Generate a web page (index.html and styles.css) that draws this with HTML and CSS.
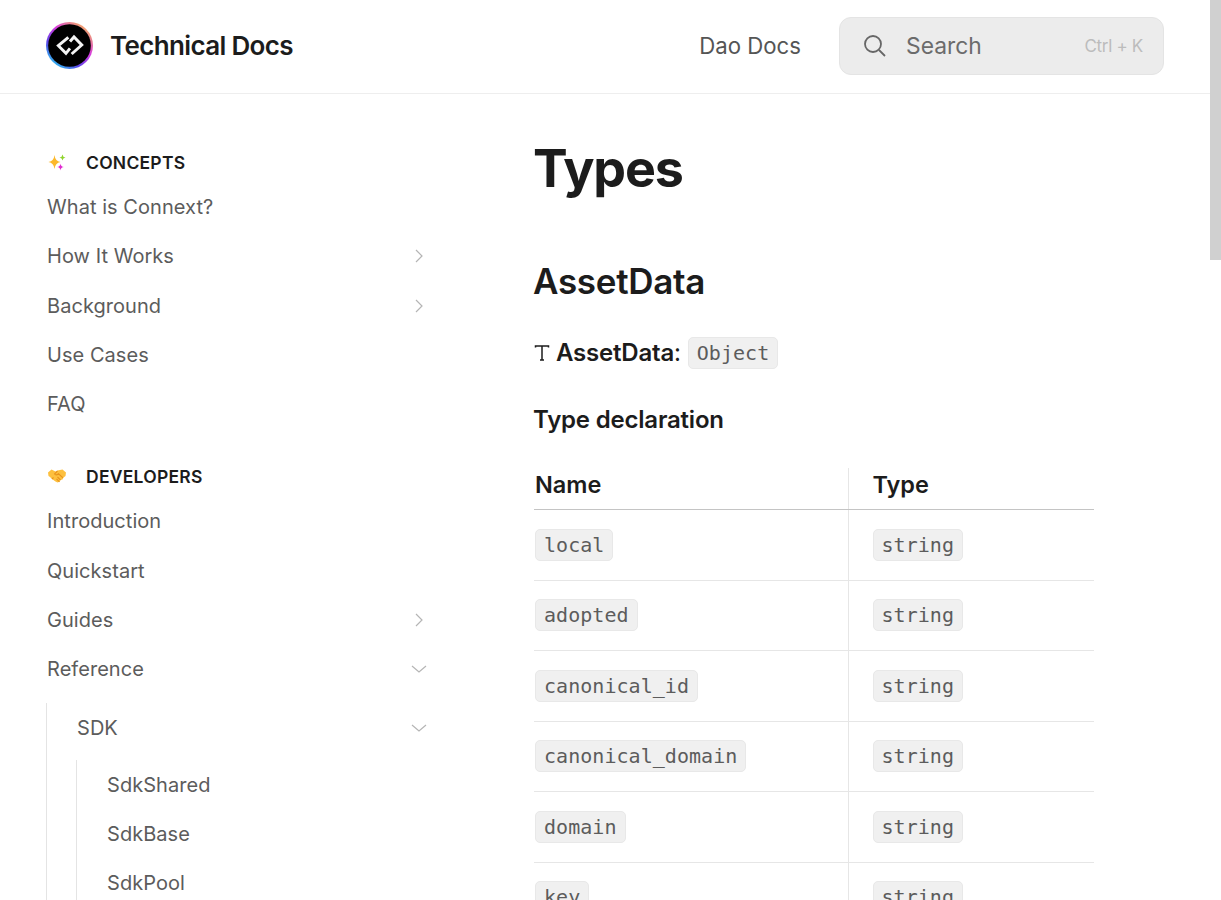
FILE: index.html
```html
<!DOCTYPE html>

<html>
<head>
    <title>Types - Technical Docs</title>
    <meta charset="UTF-8">
    <link rel="stylesheet" href="styles.css">
</head>
<body>

<div class="page">
    <header class="topbar">
        <a class="brand">
            <svg class="logo" viewBox="0 0 48 48" width="47" height="47">
                <defs>
                    <linearGradient id="ring" x1="0.85" y1="0.05" x2="0.15" y2="0.95">
                        <stop offset="0" stop-color="#f5b35c"/>
                        <stop offset="0.4" stop-color="#d63be0"/>
                        <stop offset="0.7" stop-color="#5b45e8"/>
                        <stop offset="1" stop-color="#29c6ee"/>
                    </linearGradient>
                </defs>
                <circle cx="24" cy="24" r="24" fill="url(#ring)"/>
                <circle cx="24" cy="24" r="21.8" fill="#000"/>
                <path d="M22.8 15.6 L12.6 24.2 L20.4 32 L24.5 27" fill="none" stroke="#f4f4f4" stroke-width="3"/>
                <path d="M26.2 32.7 L36.5 23.5 L28.6 15.3 L24.5 20" fill="none" stroke="#f4f4f4" stroke-width="3"/>
            </svg>
            <span class="brand-name">Technical Docs</span>
        </a>
        <a class="toplink">Dao Docs</a>
        <div class="search">
            <svg class="search-icon" viewBox="0 0 24 24" width="24" height="24">
                <circle cx="10" cy="10" r="8"/>
                <path d="M16 16 L22 22"/>
            </svg>
            <span class="search-label">Search</span>
            <span class="search-key">Ctrl + K</span>
        </div>
    </header>

    <div class="columns">
        <nav class="sidebar">
            <div class="nav-title">
                <svg class="nav-icon" viewBox="0 0 20 20" width="20" height="20">
                    <path fill="#fcb92c" d="M7.5 3 Q8.2 9.2 13.5 10 Q8.2 10.8 7.5 17 Q6.8 10.8 1.5 10 Q6.8 9.2 7.5 3 Z"/>
                    <path fill="#8fd42c" d="M15.5 2.5 Q15.8 5.2 18.5 5.5 Q15.8 5.8 15.5 8.5 Q15.2 5.8 12.5 5.5 Q15.2 5.2 15.5 2.5 Z"/>
                    <path fill="#e02bd0" d="M13.5 11.5 Q13.8 14.7 17 15 Q13.8 15.3 13.5 18.5 Q13.2 15.3 10 15 Q13.2 14.7 13.5 11.5 Z"/>
                </svg>
                CONCEPTS
            </div>
            <a class="nav-link">What is Connext?</a>
            <a class="nav-link">How It Works
                <svg class="chev" viewBox="0 0 16 16" width="16" height="16"><path d="M5 2 L11 8 L5 14"/></svg>
            </a>
            <a class="nav-link">Background
                <svg class="chev" viewBox="0 0 16 16" width="16" height="16"><path d="M5 2 L11 8 L5 14"/></svg>
            </a>
            <a class="nav-link">Use Cases</a>
            <a class="nav-link">FAQ</a>

            <div class="nav-title second">
                <svg class="nav-icon" viewBox="0 0 20 20" width="20" height="20">
                    <path fill="#fdc03f" d="M1 6.5 L4.5 3.5 L8.5 5.5 L10.5 4.5 L15.5 3.5 L19 6.5 L18.5 10 L16.5 11.5 L15.5 13.5 L13.5 14 L12.5 15.8 L10.5 16.5 L8.5 15.5 L5 13 L3 11 L1.5 10 Z"/>
                    <path fill="none" stroke="#e8931c" stroke-width="1.1" d="M10.5 5 L7.5 8 Q9 9.8 11.5 7.8 L16 11.8 M13.5 14 L10.5 11 M12.5 15.8 L9.5 12.8 M5 13 L6.5 11.5"/>
                </svg>
                DEVELOPERS
            </div>
            <a class="nav-link">Introduction</a>
            <a class="nav-link">Quickstart</a>
            <a class="nav-link">Guides
                <svg class="chev" viewBox="0 0 16 16" width="16" height="16"><path d="M5 2 L11 8 L5 14"/></svg>
            </a>
            <a class="nav-link">Reference
                <svg class="chev" viewBox="0 0 16 16" width="16" height="16"><path d="M1 5 L8 11 L15 5"/></svg>
            </a>
            <div class="nav-sub">
                <a class="nav-link">SDK
                    <svg class="chev" viewBox="0 0 16 16" width="16" height="16"><path d="M1 5 L8 11 L15 5"/></svg>
                </a>
                <div class="nav-sub inner">
                    <a class="nav-link">SdkShared</a>
                    <a class="nav-link">SdkBase</a>
                    <a class="nav-link">SdkPool</a>
                </div>
            </div>
        </nav>

        <main class="content">
            <h1>Types</h1>
            <h2>AssetData</h2>
            <p class="signature">
                <svg class="type-icon" viewBox="0 0 16 18" width="16" height="18"><path d="M1.5 3.5 V2 H14.5 V3.5 M8 2 V16 M6 16 H10"/></svg>
                <strong>AssetData</strong>: <code>Object</code>
            </p>
            <h3>Type declaration</h3>
            <table>
                <thead>
                    <tr><th>Name</th><th>Type</th></tr>
                </thead>
                <tbody>
                    <tr><td><code>local</code></td><td><code>string</code></td></tr>
                    <tr><td><code>adopted</code></td><td><code>string</code></td></tr>
                    <tr><td><code>canonical_id</code></td><td><code>string</code></td></tr>
                    <tr><td><code>canonical_domain</code></td><td><code>string</code></td></tr>
                    <tr><td><code>domain</code></td><td><code>string</code></td></tr>
                    <tr><td><code>key</code></td><td><code>string</code></td></tr>
                </tbody>
            </table>
        </main>
    </div>
</div>

<div class="scrollbar"><div class="thumb"></div></div>

</body>
</html>
```

FILE: styles.css
```css
html {
    box-sizing: border-box;
    height: 100%;
}
*, *:before, *:after {
    box-sizing: inherit;
}

body{
    font-family: Inter, "Liberation Sans", Arial, sans-serif;
    margin: 0;
    height: 100%;
    display: flex;
    overflow: hidden;
    background-color: white;
    color: #1c1c1c;
}

.page{
    flex: 1;
    min-width: 0;
}

.scrollbar{
    width: 11px;
}

.thumb{
    height: 260px;
    background-color: #d0d0d0;
}

.topbar{
    height: 94px;
    display: flex;
    align-items: center;
    padding: 0 46px 2px 46px;
    border-bottom: 1px solid #eeeeee;
}

.brand{
    display: flex;
    align-items: center;
    gap: 17px;
    margin-right: auto;
}

.brand-name{
    font-size: 26px;
    font-weight: 600;
    letter-spacing: -0.65px;
    color: #1c1c1c;
}

.toplink{
    font-size: 22.2px;
    color: #555555;
    margin-right: 38px;
}

.search{
    width: 325px;
    height: 58px;
    display: flex;
    align-items: center;
    padding: 0 20px 0 23px;
    background-color: #ececec;
    border: 1px solid #e4e4e4;
    border-radius: 12px;
}

.search-icon{
    fill: none;
    stroke: #666666;
    stroke-width: 1.8;
    margin-right: 19px;
}

.search-label{
    font-size: 22.8px;
    color: #6b6b6b;
    margin-right: auto;
}

.search-key{
    font-size: 17px;
    color: #bcbcbc;
    letter-spacing: -0.3px;
}

.columns{
    display: flex;
}

.sidebar{
    width: 380px;
    margin-left: 47px;
    padding-top: 54px;
    flex-shrink: 0;
}

.nav-title{
    display: flex;
    align-items: center;
    height: 28px;
    font-size: 17.5px;
    font-weight: 600;
    letter-spacing: 0.25px;
    color: #1c1c1c;
    margin-bottom: 6.4px;
}

.nav-title.second{
    margin-top: 33.5px;
}

.nav-icon{
    margin-right: 19px;
    flex-shrink: 0;
}

.nav-link{
    display: flex;
    align-items: center;
    justify-content: space-between;
    height: 49.3px;
    font-size: 20px;
    letter-spacing: 0.05px;
    color: #5c5c5c;
}

.chev{
    fill: none;
    stroke: #b5b5b5;
    stroke-width: 1.2;
}

.nav-sub{
    border-left: 1px solid #e4e4e4;
    padding-left: 30px;
    margin: 9px 0 0 -1px;
}

.nav-sub.inner{
    margin: 8px 0 0 -1px;
}

.content{
    margin-left: 107px;
    width: 560px;
    padding-top: 35px;
}

h1{
    font-size: 52px;
    font-weight: 700;
    letter-spacing: -1.2px;
    line-height: 76px;
    margin: 2px 0 0 -1px;
}

h2{
    font-size: 35px;
    font-weight: 600;
    line-height: 46px;
    letter-spacing: -0.3px;
    margin: 51px 0 0 -1px;
}

.signature{
    display: flex;
    align-items: center;
    font-size: 24px;
    line-height: 36px;
    margin: 31px 0 0 0;
    white-space: pre;
}

.type-icon{
    fill: none;
    stroke: #1c1c1c;
    stroke-width: 1.5;
    margin-right: 6px;
}

.signature strong{
    font-weight: 600;
    letter-spacing: -0.2px;
}

h3{
    font-size: 24px;
    font-weight: 600;
    line-height: 34px;
    letter-spacing: -0.2px;
    margin: 32px 0 0 -1px;
}

code{
    display: inline-block;
    font-family: "DejaVu Sans Mono", "Liberation Mono", monospace;
    font-size: 20px;
    letter-spacing: 0.04px;
    line-height: 28px;
    padding: 1px 8px;
    color: #5c5c5c;
    background-color: #f0f0f0;
    border: 1px solid #e8e8e8;
    border-radius: 5px;
}

table{
    width: 560px;
    border-collapse: collapse;
    table-layout: fixed;
    margin-top: 31px;
}

th{
    font-size: 23.5px;
    font-weight: 600;
    text-align: left;
    height: 41px;
    padding: 0 0 8px 1px;
    border-bottom: 1px solid #c4c4c4;
}

td{
    height: 70px;
    padding: 0 0 0 1px;
    border-bottom: 1px solid #e6e6e6;
}

tr:nth-child(odd) td{
    height: 71px;
}

th:first-child, td:first-child{
    width: 314px;
    border-right: 1px solid #e6e6e6;
}

th:last-child, td:last-child{
    padding-left: 24px;
}
```
